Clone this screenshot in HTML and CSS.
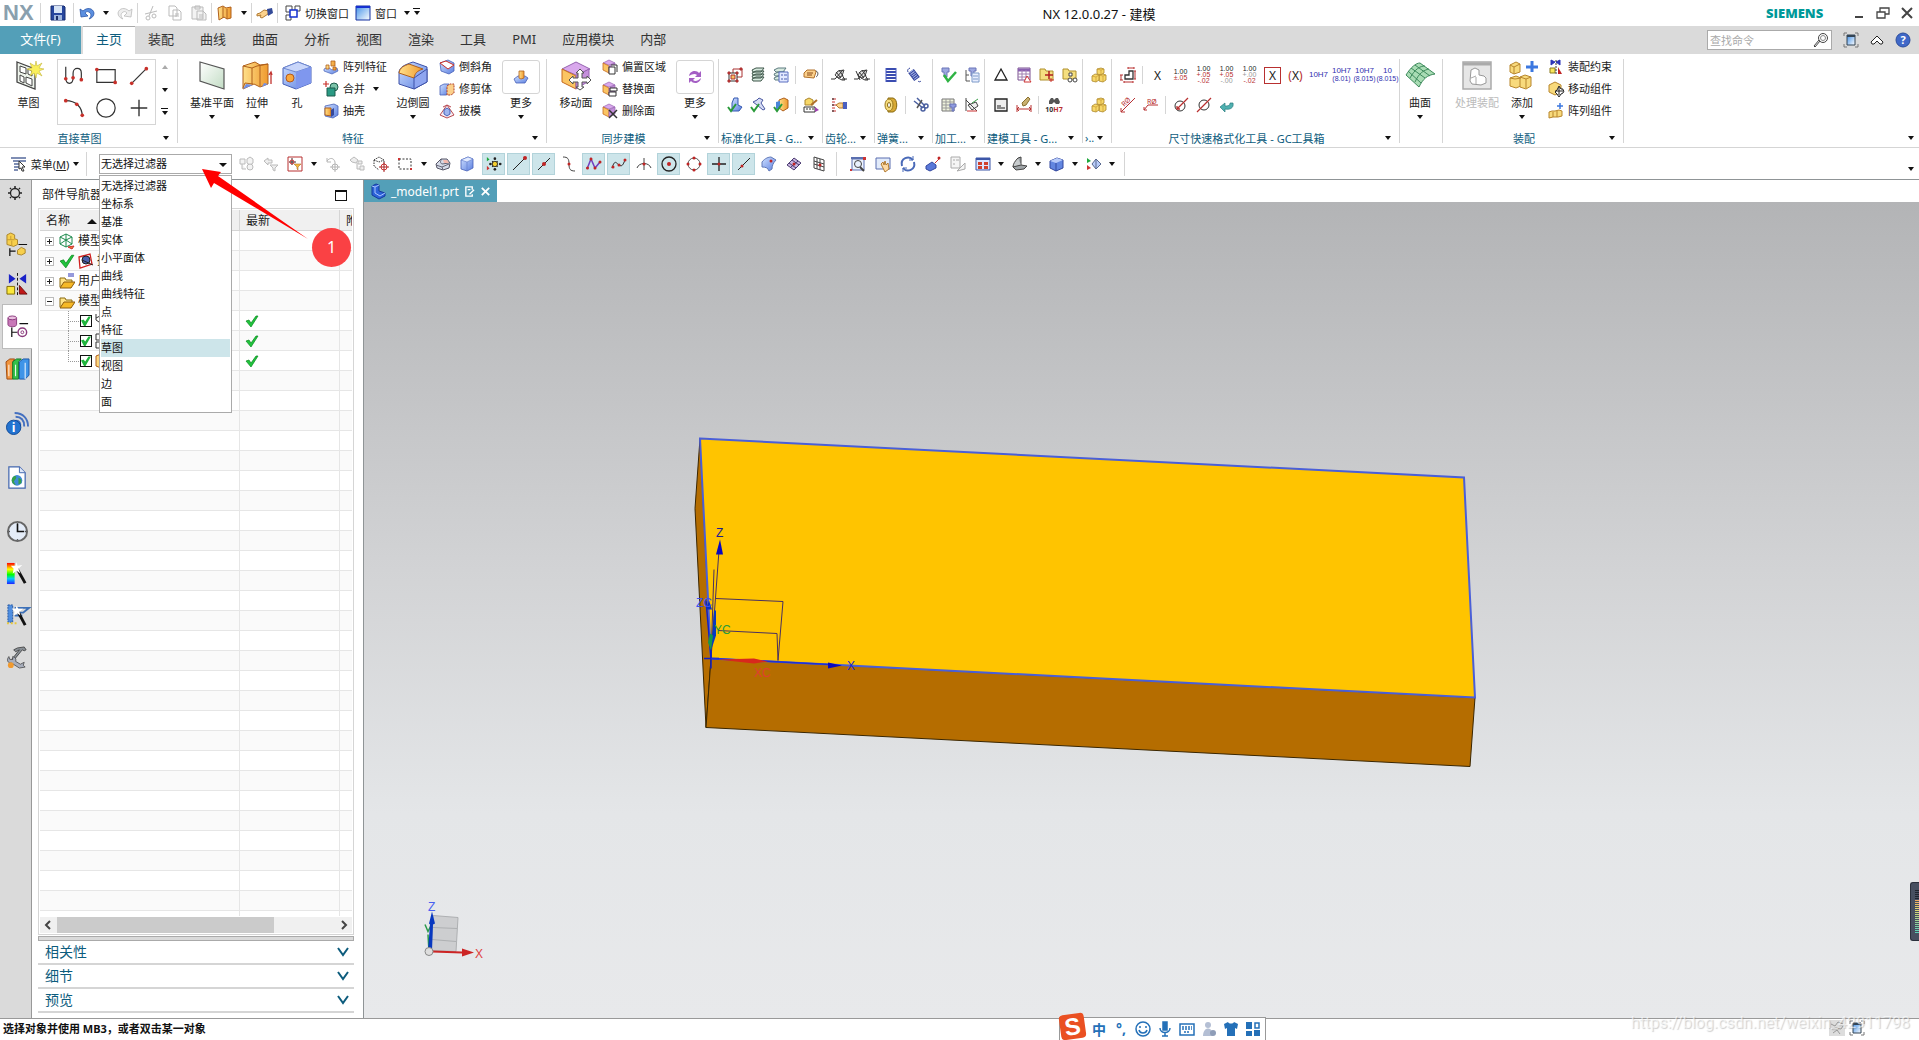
FILE: index.html
```html
<!DOCTYPE html>
<html lang="zh-CN">
<head>
    <meta charset="UTF-8">
    <meta name="viewport" content="width=device-width, initial-scale=1.0">
    <title>NX 12.0.0.27 - 建模</title>
    <link rel="stylesheet" href="styles.css">
</head>
<body>
    <!-- Shared icons -->
    <svg class="defs" width="0" height="0" aria-hidden="true">
        <defs>
            <linearGradient id="gold" x1="0" x2="1"><stop offset="0" stop-color="#ffe08a"/><stop offset="1" stop-color="#ef9a2e"/></linearGradient>
            <linearGradient id="blue" x1="0" x2="1" y1="0" y2="1"><stop offset="0" stop-color="#cfe0ff"/><stop offset="1" stop-color="#5b7fe0"/></linearGradient>
            <linearGradient id="sky" x1="0" x2="1" y1="0" y2="1"><stop offset="0" stop-color="#3f8fe8"/><stop offset="1" stop-color="#fff"/></linearGradient>
            <linearGradient id="glass" x1="0" x2="1" y1="0" y2="1"><stop offset="0" stop-color="#fff"/><stop offset="1" stop-color="#c2dcc4"/></linearGradient>
            <linearGradient id="rainbow" x1="0" x2="0" y1="0" y2="1"><stop offset="0" stop-color="#f00"/><stop offset=".3" stop-color="#ff0"/><stop offset=".55" stop-color="#0f0"/><stop offset=".75" stop-color="#0cf"/><stop offset="1" stop-color="#22f"/></linearGradient>
        </defs>
        <symbol id="check" viewBox="0 0 14 14"><path d="M1 7l3-1 2 3 5-7 2 0-7 11z" fill="#1fc43c" stroke="#0a8a20" stroke-width=".7"/></symbol>
        <symbol id="cubes" viewBox="0 0 16 16"><g fill="#f7d869" stroke="#ab862c" stroke-width=".8"><path d="M6 2l4-1 3 1v4l-3 2-4-1z"/><path d="M8 8l4-1 3 1v5l-3 2-4-1z"/><path d="M1 9l3-2 4 1v5l-3 2-4-1z"/></g><path d="M6 2l4 1 3-1M10 3v5M1 9l4 1 3-2M5 10v5M8 8l4 1 3-1M12 9v6" stroke="#c79b32" stroke-width=".7" fill="none"/></symbol>
        <symbol id="box" viewBox="0 0 16 16"><path d="M2 4l7-3 5 2v9l-6 3-6-2z" fill="url(#blue)" stroke="#4761b8" stroke-width=".8"/><path d="M2 4l6 2 6-3-5-2z" fill="#e2ebff" stroke="#5f7ac9" stroke-width=".6"/><path d="M8 6v9" stroke="#5f7ac9" stroke-width=".6"/></symbol>
        <symbol id="facebox" viewBox="0 0 16 16"><path d="M1 4l6-3 6 3-6 2z" fill="#d9a8ec" stroke="#9563b0" stroke-width=".7"/><path d="M1 4l6 3v7l-6-3z" fill="#fbc563" stroke="#c66a20" stroke-width=".8"/><path d="M7 7l6-3v7l-6 3z" fill="#c58fdc" stroke="#9563b0" stroke-width=".7"/></symbol>
        <symbol id="folder" viewBox="0 0 16 14"><path d="M1 12V3h5l1 2h6v2" fill="#ffe48a" stroke="#8a6a10"/><path d="M1 13l4-6h11l-4 6z" fill="#f6b927" stroke="#8a5c10"/></symbol>
        <symbol id="gears" viewBox="0 0 16 16"><path d="M4 8l3-4 6-1-2 6-4 2z" fill="#e2e2e2" stroke="#444"/><path d="M0 12h4l8-9M11 12h5M5 5l5 6M8 3l4 6M7 11l4 2h3l-3-5" stroke="#333" fill="none"/></symbol>
        <symbol id="fit" viewBox="0 0 16 16"><path d="M1 4V1h3M12 1h3v3M15 12v3h-3M4 15H1v-3" fill="none" stroke="#777"/><path d="M4 3h8v10H4z" fill="url(#sky)" stroke="#345"/><path d="M4 4h8" stroke="#345" stroke-width="2"/></symbol>
    </svg>

    <!-- Title bar -->
    <header class="titlebar">
        <div class="quick">
            <span class="nx">NX</span>
            <i class="sep"></i>
            <button class="q q-save" title="保存"><svg viewBox="0 0 16 16"><path d="M1 1h13l1 1v13H1z" fill="#27469e" stroke="#162c70"/><path d="M4 1h8v7H4z" fill="#d7e4f5"/><path d="M4 10h8v5H4z" fill="#9eb5dd"/><path d="M6 11h2v4H6z" fill="#1a2d66"/></svg></button>
            <i class="sep"></i>
            <button class="q" title="撤销"><svg viewBox="0 0 16 16"><path d="M1 4l3 2c4-4 10-3 11 2 0 3-2 5-5 6 2-2 3-5 0-7-2-1-3 0-4 1l3 3-7 1z" fill="#5b8fe0" stroke="#2c57a8" stroke-width=".8"/></svg></button>
            <button class="drop" aria-label="撤销列表"><i class="caret"></i></button>
            <button class="q" title="重做"><svg viewBox="0 0 16 16"><path d="M15 4l-3 2C8 2 2 3 1 8c0 3 2 5 5 6-2-2-3-5 0-7 2-1 3 0 4 1l-3 3 7 1z" fill="#eee" stroke="#bbb" stroke-width=".8"/></svg></button>
            <i class="sep"></i>
            <button class="q q-edit" title="剪切"><svg viewBox="0 0 16 16" fill="none" stroke="#bbb"><path d="M6 11L10 1M14 6L2 9"/><circle cx="5" cy="13" r="2"/><circle cx="11" cy="11" r="2"/></svg></button>
            <button class="q q-edit" title="复制"><svg viewBox="0 0 16 16" fill="#fff" stroke="#bbb"><path d="M2 1h6l2 2v8H2zM6 5h6l2 2v8H6zM8 9h4M8 11h4"/></svg></button>
            <button class="q q-edit" title="粘贴"><svg viewBox="0 0 16 16" fill="#f3f3f3" stroke="#bbb"><path d="M1 2h11v12H1zM4 1h5v3H4zM6 6h6l3 3v6H6zM8 10h4M8 12h4"/></svg></button>
            <i class="sep"></i>
            <button class="q" title="拉伸"><svg viewBox="0 0 16 16"><path d="M1 3l5-2 3 2 5-1v11l-4 1-3-2-5 3z" fill="url(#gold)" stroke="#b0601c"/><path d="M6 2v11M10 4v10" stroke="#b0601c"/></svg></button>
            <button class="drop" aria-label="更多特征"><i class="caret"></i></button>
            <i class="sep"></i>
            <button class="q" title="触控"><svg viewBox="0 0 16 16"><path d="M0 9l3-1 4-3 5 1-1 3-6 4-2-1 1-2-4 1z" fill="#fcd28c" stroke="#b27b32"/><path d="M10 4l5-1 1 5-5 3z" fill="#334a98"/></svg></button>
            <i class="sep"></i>
            <button class="q q-text"><svg viewBox="0 0 16 16" fill="#fff" stroke="#444"><path d="M1 1h6v6H1zM10 1h5v5h-5zM1 10h5v5H1z"/><path d="M5 5h7v7H5z" stroke="#1530d0" stroke-width="1.5"/></svg>切换窗口</button>
            <button class="q q-text"><svg viewBox="0 0 16 16"><path d="M1 1h14v14H1z" fill="url(#sky)" stroke="#1530a0"/><path d="M1 2h14" stroke="#1530d0" stroke-width="2"/></svg>窗口<i class="caret"></i></button>
            <button class="drop bar" aria-label="工具条选项"><i class="caret"></i></button>
        </div>
        <h1 class="title">NX 12.0.0.27 - 建模</h1>
        <span class="brand">SIEMENS</span>
        <div class="window-buttons">
            <button aria-label="最小化"><svg viewBox="0 0 14 14"><path d="M3 11h8" stroke="#444" stroke-width="2"/></svg></button>
            <button aria-label="还原"><svg viewBox="0 0 14 14" fill="#fff" stroke="#444" stroke-width="1.3"><path d="M4 2h9v6H4z"/><path d="M1 6h8v6H1z"/></svg></button>
            <button aria-label="关闭"><svg viewBox="0 0 14 14"><path d="M2 2l10 10M12 2L2 12" stroke="#444" stroke-width="2"/></svg></button>
        </div>
    </header>

    <!-- Ribbon tabs -->
    <nav class="tabs">
        <a class="file" href="#">文件(F)</a>
        <a class="active" href="#">主页</a>
        <a href="#">装配</a>
        <a href="#">曲线</a>
        <a href="#">曲面</a>
        <a href="#">分析</a>
        <a href="#">视图</a>
        <a href="#">渲染</a>
        <a href="#">工具</a>
        <a href="#">PMI</a>
        <a href="#">应用模块</a>
        <a href="#">内部</a>
        <div class="find">
            <input type="text" placeholder="查找命令" aria-label="查找命令">
            <svg viewBox="0 0 16 16" fill="none" stroke="#444"><circle cx="10" cy="6" r="4.5"/><circle cx="10" cy="6" r="2.5" stroke="#888"/><path d="M7 9l-5 6-1-1 5-6"/></svg>
        </div>
        <button class="help" aria-label="全屏"><svg viewBox="0 0 16 16"><use href="#fit"/></svg></button>
        <button class="help" aria-label="最小化功能区"><svg viewBox="0 0 16 16" fill="#fff" stroke="#222"><path d="M2 10l6-6 6 6-1 2h-2L8 9l-3 3H3z"/></svg></button>
        <button class="help" aria-label="帮助"><svg viewBox="0 0 16 16"><circle cx="8" cy="8" r="7" fill="#3f68c8" stroke="#2c4d9c"/><text x="8" y="12" text-anchor="middle" font-size="11" font-weight="700" fill="#fff">?</text></svg></button>
    </nav>

    <!-- Ribbon -->
    <main class="ribbon">
        <section class="group g-sketch">
            <div class="group-body">
                <button class="tool sketch"><svg viewBox="0 0 30 30"><path d="M3 2l18 7v20L3 22z" fill="#eef4ec" stroke="#444" stroke-width="1.3"/><path d="M6 6l6 2v6l-6-2zM6 15l4 2v6l-4-2zM12 17l6 2v7l-6-3zM14 9l4 2v5l-4-2z" fill="#fff" stroke="#444"/><path d="M22 1l1 5 5-3-3 5 5 1-5 2 3 5-5-3-1 5-2-5-4 3 2-5-5-2 5-1-2-5 5 3z" fill="#f9ef5c" stroke="#c4b63c" stroke-width=".6"/></svg>草图</button>
                <div class="gallery">
                    <button title="轮廓"><svg viewBox="0 0 24 24" fill="none" stroke="#333" stroke-width="1.3"><path d="M3 2v12c0 8 8 8 8 0V9c0-7 9-7 9 0v7"/><g fill="#c8302a" stroke="none"><circle cx="3" cy="15" r="2"/><circle cx="11" cy="14" r="2"/><circle cx="20" cy="16" r="2"/></g></svg></button>
                    <button title="矩形"><svg viewBox="0 0 24 24" fill="none" stroke="#333" stroke-width="1.3"><path d="M2 5h20v14H2z"/><g fill="#c8302a" stroke="none"><circle cx="2" cy="5" r="2"/><circle cx="22" cy="19" r="2"/></g></svg></button>
                    <button title="直线"><svg viewBox="0 0 24 24"><path d="M4 20L20 4" stroke="#333" stroke-width="1.3"/><g fill="#c8302a"><circle cx="4" cy="20" r="2"/><circle cx="20" cy="4" r="2"/></g></svg></button>
                    <button title="圆弧"><svg viewBox="0 0 24 24" fill="none" stroke="#333" stroke-width="1.3"><path d="M3 4c11 0 18 7 18 17"/><g fill="#c8302a" stroke="none"><circle cx="3" cy="4" r="2"/><circle cx="15" cy="8" r="2"/><circle cx="21" cy="20" r="2"/></g></svg></button>
                    <button title="圆"><svg viewBox="0 0 24 24"><circle cx="12" cy="12" r="10" fill="none" stroke="#333" stroke-width="1.3"/></svg></button>
                    <button title="点"><svg viewBox="0 0 24 24"><path d="M12 3v18M3 12h18" stroke="#333" stroke-width="1.5"/></svg></button>
                </div>
                <div class="scroll">
                    <button class="drop up" aria-label="上"><i class="caret"></i></button>
                    <button class="drop" aria-label="下"><i class="caret"></i></button>
                    <button class="drop bar" aria-label="展开"><i class="caret"></i></button>
                </div>
            </div>
            <div class="group-name"><span>直接草图</span><i class="caret"></i></div>
        </section>

        <section class="group g-feature">
            <div class="group-body">
                <button class="tool wide"><svg viewBox="0 0 30 30"><path d="M3 2l24 7v20L3 21z" fill="url(#glass)" stroke="#555" stroke-width="1.2"/></svg>基准平面<i class="caret"></i></button>
                <button class="tool"><svg viewBox="0 0 30 30"><path d="M1 6l12-4 5 3 8-1v20l-8 3-6-3-11 5z" fill="url(#gold)" stroke="#b0601c"/><path d="M1 6l9 2 5-2 11-2M10 8v16M18 5v21M1 28l2-5 8 1" fill="none" stroke="#b0601c"/><path d="M1 29l3-5 7 1zM20 27l2-4 4 1z" fill="#6f8fe8"/><path d="M29 24V12m-2 3l2-3 1 3" stroke="#c23430" fill="none" stroke-width="1.3"/></svg>拉伸<i class="caret"></i></button>
                <button class="tool"><svg viewBox="0 0 30 30"><path d="M1 8l15-6 13 5v16l-15 6-13-5z" fill="url(#blue)" stroke="#4761b8"/><path d="M1 8l13 4 15-5-13-5z" fill="#c9d6fa" stroke="#6f88d0"/><path d="M14 12l15-5v16l-15 6z" fill="#7f97ee"/><circle cx="8" cy="18" r="4" fill="#f9a83c" stroke="#b5591c"/></svg>孔</button>
                <div class="col">
                    <button><svg viewBox="0 0 16 16"><path d="M1 10l4-2 4 3 5-2 1 3-6 3-8-3z" fill="url(#blue)" stroke="#4761b8" stroke-width=".7"/><path d="M3 6h3v4H3zM8 2h4v5H8zM10 8h3v3h-3z" fill="url(#gold)" stroke="#b0601c" stroke-width=".8"/></svg>阵列特征</button>
                    <button><svg viewBox="0 0 16 16"><circle cx="11" cy="6" r="4" fill="#7cc4aa" stroke="#1d5d4c"/><path d="M4 7h8v8H4z" fill="#2a9a84" stroke="#1d5d4c"/><path d="M3 0v6M0 3h6" stroke="#c8302a" stroke-width="1.2"/></svg>合并<i class="caret"></i></button>
                    <button><svg viewBox="0 0 16 16"><path d="M2 3l9-2 4 2v9l-5 3-8-2z" fill="url(#blue)" stroke="#4761b8" stroke-width=".8"/><path d="M2 5h6v8l-6-1z" fill="url(#gold)" stroke="#b0601c"/><path d="M8 7l3-2v7l-3 2z" fill="#35489c"/></svg>抽壳</button>
                </div>
                <button class="tool"><svg viewBox="0 0 30 30"><path d="M1 12C2 7 6 5 15 2l14 5v15l-13 7-15-5z" fill="url(#blue)" stroke="#3d51a8"/><path d="M1 13C2 7 6 6 11 4l14 5c-6 2-8 4-9 9z" fill="url(#gold)" stroke="#b0601c"/><path d="M16 18l13-9v13l-13 7z" fill="#8fa6f0" stroke="#3d51a8"/></svg>边倒圆<i class="caret"></i></button>
                <div class="col">
                    <button><svg viewBox="0 0 16 16"><path d="M1 4l8-3 6 3v8l-5 3-8-3z" fill="url(#blue)" stroke="#4761b8" stroke-width=".8"/><path d="M1 4l6-2 8 4-6 4z" fill="#fff" stroke="#c8302a"/></svg>倒斜角</button>
                    <button><svg viewBox="0 0 16 16"><path d="M1 5l4-2h5v10l-3 1H1z" fill="url(#blue)" stroke="#4761b8" stroke-width=".8"/><path d="M8 5l3-2h4v9l-3 2H8z" fill="#fbd08b" stroke="#b0402a" stroke-dasharray="2 1"/></svg>修剪体</button>
                    <button><svg viewBox="0 0 16 16"><path d="M8 2L1 12l7 3 7-3zM4 4l4-2 4 2" fill="#f8eef2" stroke="#b84a52"/><path d="M5 7l3-2 3 2v4l-3 2-3-2z" fill="#9fb4ee" stroke="#4761b8"/></svg>拔模</button>
                </div>
                <button class="tool more"><span><svg viewBox="0 0 16 16"><path d="M1 10l4-3h7l3 2-3 5H3z" fill="url(#blue)" stroke="#4761b8" stroke-width=".8"/><path d="M6 2h5v7l-3 1-2-1z" fill="url(#gold)" stroke="#b0601c" stroke-width=".8"/></svg></span>更多<i class="caret"></i></button>
            </div>
            <div class="group-name"><span>特征</span><i class="caret"></i></div>
        </section>

        <section class="group g-sync">
            <div class="group-body">
                <button class="tool"><svg viewBox="0 0 30 30"><path d="M1 9l14-7 14 7-14 6z" fill="#d9a8ec" stroke="#9563b0"/><path d="M1 9l14 7v13L1 22z" fill="#fbc563" stroke="#c66a20"/><path d="M15 16l13-7v12l-13 8z" fill="#c58fdc" stroke="#9563b0"/><path d="M19 9l4 4h-2v5h5v-2l4 4-4 4v-2h-5v5h2l-4 3-4-3h2v-5h-5v2l-4-4 4-4v2h5v-5h-2z" fill="#fff" stroke="#555"/></svg>移动面</button>
                <div class="col">
                    <button><svg viewBox="0 0 16 16"><use href="#facebox"/><path d="M7 8h6v7H7zM9 6h6v7" fill="#fff" stroke="#333"/></svg>偏置区域</button>
                    <button><svg viewBox="0 0 16 16"><use href="#facebox"/><path d="M8 7h7v3H8zM7 11h7v4H7z" fill="#fff" stroke="#333"/></svg>替换面</button>
                    <button><svg viewBox="0 0 16 16"><use href="#facebox"/><path d="M7 7l8 8M15 7l-8 8" stroke="#333" stroke-width="1.5"/></svg>删除面</button>
                </div>
                <button class="tool more"><span><svg viewBox="0 0 16 16"><path d="M2 7c1-6 8-6 10-3l2-2v6H8l2-2c-2-2-5-1-8 1zM14 9c-1 6-8 6-10 3l-2 2V9h6l-2 2c2 2 5 1 8-2z" fill="#a45fc4"/></svg></span>更多<i class="caret"></i></button>
            </div>
            <div class="group-name"><span>同步建模</span><i class="caret"></i></div>
        </section>

        <section class="group g-std">
            <div class="group-body rows">
                <div>
                    <button><svg viewBox="0 0 16 16" fill="#fff" stroke="#a33"><path d="M6 2h9v8H6z"/><path d="M2 6h8v8H2z" stroke="#333"/><path d="M4 8h4v4H4z" fill="#fbc563"/><path d="M1 5h2v2H1zM9 5h2v2H9zM1 13h2v2H1zM9 13h2v2H9zM13 1h2v2h-2z" fill="#c33"/></svg></button>
                    <button><svg viewBox="0 0 16 16" fill="#d7eadf" stroke="#3c5548"><path d="M2 12l4-2h8l-3 4H3zM2 9l4-2h8l-3 4H3zM2 6l4-2h8l-3 4H3zM2 3l4-2h8l-3 4H3z"/></svg></button>
                    <button><svg viewBox="0 0 16 16" fill="#d7eadf" stroke="#5d7a80"><path d="M1 11l4-2h7l-3 4H2zM1 7l4-2h7l-3 4H2zM1 3l4-2h8l-3 4H3z"/><path d="M6 5h9v10H6z" fill="#e3e9ff" stroke="#5a6fc0"/><path d="M8 8h2M11 8h3M8 12h2M11 12h3" stroke="#4a5fb0"/></svg></button>
                    <i class="sep"></i>
                    <button><svg viewBox="0 0 16 16"><path d="M1 6l3-3h8l1 2-2 6-10-1z" fill="#fbd08b" stroke="#b0702c"/><path d="M4 6h6M4 8h5" stroke="#8a4a18"/><path d="M13 4c3 1 2 5 0 6" stroke="#555" fill="none"/></svg></button>
                </div>
                <div>
                    <button><svg viewBox="0 0 16 16"><path d="M7 1h4v7l4 2-3 4H5V6z" fill="url(#blue)" stroke="#3458b0"/><path d="M1 10l3 4 5-7" stroke="#2a9a3a" stroke-width="2" fill="none"/></svg></button>
                    <button><svg viewBox="0 0 16 16"><path d="M3 5l4-2 2-2 4 2-2 3 4 6-2 1-6-5z" fill="#d6dcf5" stroke="#4a58a0"/><path d="M1 10l3 4 5-7" stroke="#2a9a3a" stroke-width="2" fill="none"/></svg></button>
                    <button><svg viewBox="0 0 16 16"><path d="M6 3l5-2 4 2v8l-5 3-4-3z" fill="url(#gold)" stroke="#b0601c"/><path d="M3 5l4-1v8H3z" fill="#4a86d8"/><path d="M1 10l3 4 5-7" stroke="#2a9a3a" stroke-width="2" fill="none"/></svg></button>
                    <i class="sep"></i>
                    <button><svg viewBox="0 0 16 16"><path d="M2 3l4-2 4 2v5H2z" fill="#f7d869" stroke="#ab862c"/><path d="M1 10h11v5H1z" fill="#fff" stroke="#333"/><path d="M3 12h2M6 12h2M9 12h2" stroke="#333"/><path d="M8 8l6-5" stroke="#b0702c" stroke-width="2"/><path d="M12 10l4 3-4 2z" fill="#a040b0"/></svg></button>
                </div>
            </div>
            <div class="group-name left"><span>标准化工具 - G...</span><i class="caret"></i></div>
        </section>

        <section class="group g-gear">
            <div class="group-body rows">
                <div><button><svg viewBox="0 0 16 16"><use href="#gears"/></svg></button><button><svg viewBox="0 0 16 16"><use href="#gears"/><path d="M2 4l4 9" stroke="#333"/></svg></button></div>
                <div><button><svg viewBox="0 0 16 16"><path d="M1 2h4M1 5h3M1 8h4M1 11h3M1 14h4" stroke="#c33"/><path d="M1 2h2M1 8h2M1 14h2" stroke="#222"/><path d="M5 8l3-2h4v5H8z" fill="#fcd28c" stroke="#b27b32"/><path d="M12 5h4v7h-4z" fill="#4a5fc0"/></svg></button></div>
            </div>
            <div class="group-name left"><span>齿轮...</span><i class="caret"></i></div>
        </section>

        <section class="group g-spring">
            <div class="group-body rows">
                <div>
                    <button><svg viewBox="0 0 16 16"><path d="M3 2h10M3 5h10M3 8h10M3 11h10M3 14h10" stroke="#3a4cb0" stroke-width="2"/><path d="M3 1v14M13 1v14" stroke="#4a5cc0"/></svg></button>
                    <button><svg viewBox="0 0 16 16"><path d="M5 4l6 8" stroke="#33449c" stroke-width="7"/><path d="M5 4l6 8" stroke="#a9b6ea" stroke-width="5" stroke-dasharray="1 1"/><path d="M4 1c-2 1-3 2-2 4M12 14c1 1 2 1 3 0" stroke="#33449c" fill="none"/></svg></button>
                </div>
                <div>
                    <button><svg viewBox="0 0 16 16"><path d="M5 1h5c5 1 5 13 0 14H5z" fill="#d8aa35" stroke="#8a6a10"/><ellipse cx="6" cy="8" rx="4" ry="6" fill="#f7dc7c" stroke="#9a7a20"/><ellipse cx="6" cy="8" rx="1.5" ry="2.5" fill="#fff" stroke="#8a6a10"/></svg></button>
                    <i class="sep"></i>
                    <button><svg viewBox="0 0 16 16" fill="none" stroke="#4a5fa0" stroke-width="1.5"><path d="M1 4l9 7M4 1l8 8"/><path d="M9 3l-5 8" stroke="#555"/><circle cx="10" cy="12" r="2"/><circle cx="13" cy="9" r="2"/></svg></button>
                </div>
            </div>
            <div class="group-name left"><span>弹簧...</span><i class="caret"></i></div>
        </section>

        <section class="group g-machine">
            <div class="group-body rows">
                <div>
                    <button><svg viewBox="0 0 16 16"><path d="M1 1h7v4H6v5H3V5H1z" fill="#9da8e0" stroke="#6a74b8"/><path d="M3 8l4 6 8-9" stroke="#2fb344" stroke-width="2.5" fill="none"/></svg></button>
                    <button><svg viewBox="0 0 16 16"><path d="M5 1h7v3h-2v5H7V4H5z" fill="#9da8e0" stroke="#6a74b8"/><path d="M2 3v11h4M2 8h3" stroke="#555" fill="none"/><path d="M8 6h7v9H8z" fill="#e8eeff" stroke="#7d9ac8"/><path d="M9 9h5M9 12h5" stroke="#7d9ac8"/></svg></button>
                </div>
                <div>
                    <button><svg viewBox="0 0 16 16"><path d="M1 2h12v12H1z" fill="#eef2dc" stroke="#777"/><path d="M1 5h12M1 8h12M1 11h12M5 2v12M9 2v12" stroke="#999"/><path d="M9 7h6v3h-2v4h-2v-4H9z" fill="#8f9be0" stroke="#6a74b8"/></svg></button>
                    <button><svg viewBox="0 0 16 16" fill="none" stroke="#444"><path d="M2 1v13M2 3l11 11M4 8l8-3 2 4-6 4z" fill="#eee"/><path d="M8 6l6-4" stroke="#3aa04a"/><path d="M3 14h10" stroke="#c33"/></svg></button>
                </div>
            </div>
            <div class="group-name left"><span>加工...</span><i class="caret"></i></div>
        </section>

        <section class="group g-model">
            <div class="group-body rows">
                <div>
                    <button><svg viewBox="0 0 16 16"><path d="M8 2l6 11H2z" fill="#fff" stroke="#222" stroke-width="1.3"/></svg></button>
                    <button><svg viewBox="0 0 16 16"><path d="M2 1h12v12H2z" fill="#fff" stroke="#7a5090"/><path d="M2 3h12" stroke="#8a60b0" stroke-width="3"/><path d="M2 7h12M2 10h12M6 3v10M10 3v10" stroke="#a080b0"/><path d="M11 9l4 6H8z" fill="#fff" stroke="#c33"/></svg></button>
                    <button><svg viewBox="0 0 16 16"><path d="M1 2h5l1 2h7v9H1z" fill="#f5df80" stroke="#b0902c"/><path d="M10 4v8M6 8h8" stroke="#b02020" stroke-width="1.5"/><path d="M12 11v4M10 13h5" stroke="#c33"/></svg></button>
                    <button><svg viewBox="0 0 16 16"><path d="M1 2h5l1 2h7v8H1z" fill="#f5df80" stroke="#b0902c"/><path d="M7 6h3v3H7z" fill="#fff" stroke="#444"/><circle cx="8" cy="13" r="2" fill="#fff" stroke="#444"/><circle cx="13" cy="13" r="2" fill="#fff" stroke="#444"/></svg></button>
                </div>
                <div>
                    <button><svg viewBox="0 0 16 16"><path d="M2 2h12v12H2z" fill="#eee" stroke="#222" stroke-width="1.3"/><path d="M4 9h4M4 11h8" stroke="#222"/></svg></button>
                    <button><svg viewBox="0 0 16 16"><path d="M6 6l6-6 2 2-4 6-3 1z" fill="#c9b070" stroke="#8a7030"/><path d="M1 8v7M15 8v7M1 12h14M3 10l-2 2 2 2M13 10l2 2-2 2" stroke="#b83030" fill="none"/></svg></button>
                    <i class="sep"></i>
                    <button><svg viewBox="0 0 16 16"><path d="M3 4l2-3h2l1 2 2-2h2l2 4-1 2h-3L8 5 6 7H3z" fill="#555"/><text x="8" y="15" text-anchor="middle" font-size="7" font-weight="700" fill="#333">10<tspan fill="#b83030">H7</tspan></text></svg></button>
                </div>
            </div>
            <div class="group-name left"><span>建模工具 - G...</span><i class="caret"></i></div>
        </section>

        <section class="group g-p">
            <div class="group-body rows">
                <div><button><svg viewBox="0 0 16 16"><use href="#cubes"/></svg></button></div>
                <div><button><svg viewBox="0 0 16 16"><use href="#cubes"/></svg></button></div>
            </div>
            <div class="group-name left"><span>›..</span><i class="caret"></i></div>
        </section>

        <section class="group g-dim">
            <div class="group-body rows">
                <div>
                    <button><svg viewBox="0 0 16 16" fill="none" stroke="#333"><path d="M5 12V8h4V4h4v8z" stroke-width="1.3"/><path d="M8 1h6M8 0v2M14 0v2M15 4v8M1 8v5M0 8h3M0 13h3M4 15h9M4 14v2M13 14v2M14 4h2M14 12h2" stroke="#b83030"/></svg></button>
                    <i class="sep"></i>
                    <button class="x">X</button>
                    <button class="tol">1.00<b>±.05</b></button>
                    <button class="tol">1.00<b>+.05</b><b>-.02</b></button>
                    <button class="tol">1.00<b>+.05</b><b class="g">-.00</b></button>
                    <button class="tol">1.00<b class="g">+.00</b><b>-.02</b></button>
                    <button class="x boxed">X</button>
                    <button class="x paren"><i>(</i>X<i>)</i></button>
                    <button class="fit">10H7</button>
                    <button class="fit">10H7<span>(8.01)</span></button>
                    <button class="fit">10H7<span>(8.015)</span></button>
                    <button class="fit">10<span>(8.015)</span></button>
                </div>
                <div>
                    <button><svg viewBox="0 0 16 16" stroke="#b83030" fill="none"><path d="M1 15L15 1M1 11v4h4"/><text x="3" y="9" font-size="7" stroke="none" fill="#b83030" transform="rotate(-45 5 8)">RØ</text></svg></button>
                    <button><svg viewBox="0 0 16 16" stroke="#b83030" fill="none"><path d="M1 13l4-5h10M1 10v3h3"/><text x="4" y="7" font-size="7" stroke="none" fill="#b83030">RØ</text></svg></button>
                    <i class="sep"></i>
                    <button><svg viewBox="0 0 16 16" fill="none" stroke="#333"><circle cx="7" cy="9" r="5"/><path d="M15 1L4 12M4 9v3h3" stroke="#b83030" stroke-width="1.3"/></svg></button>
                    <button><svg viewBox="0 0 16 16" fill="none" stroke="#333"><circle cx="8" cy="8" r="5"/><path d="M15 1L1 15" stroke="#b83030" stroke-width="1.3"/></svg></button>
                    <button><svg viewBox="0 0 16 16"><path d="M1 10l5-4v3c4 0 5-1 5-3h3c1 5-3 7-8 6v3z" fill="#4fb0b0" stroke="#2a7c80" stroke-width=".7"/></svg></button>
                </div>
            </div>
            <div class="group-name"><span>尺寸快速格式化工具 - GC工具箱</span><i class="caret"></i></div>
        </section>

        <section class="group g-surface">
            <div class="group-body">
                <button class="tool"><svg viewBox="0 0 30 30"><path d="M1 15C6 7 11 3 15 3l15 11c-8 1-12 5-16 13z" fill="#a9dcb4" stroke="#3d8a5c"/><path d="M5 18C10 9 15 6 20 6M10 22c4-9 9-12 14-13M6 8l14 10M10 5l15 11M3 11l13 12" stroke="#3d8a5c" fill="none"/></svg>曲面<i class="caret"></i></button>
            </div>
        </section>

        <section class="group g-asm">
            <div class="group-body">
                <button class="tool wide" disabled><svg viewBox="0 0 30 30"><path d="M1 2h28v27H1z" fill="#e6e6e6" stroke="#aaa" stroke-width="1.5"/><path d="M1 4h28" stroke="#aaa" stroke-width="3"/><path d="M9 10l4-2 4 2v5l5 1 2 2v5l-5 2-9-1-2-3z" fill="#fff" stroke="#999"/><path d="M14 17v7M9 18l5-2" stroke="#aaa"/></svg>处理装配</button>
                <button class="tool"><svg viewBox="0 0 30 30"><g fill="#f8da7c" stroke="#b8862c"><path d="M3 5l6-3 4 2v8l-6 2-4-2z"/><path d="M3 18l6-2 5 2v8l-5 2-6-2z"/><path d="M13 17l5-2 6 2v9l-5 3-6-2z"/><path d="M3 5l4 2 6-3M7 7v7M3 18l5 1 6-1M13 17l6 2 5-2M19 19v9" fill="none"/></g><path d="M25 1v11M19 7h12" stroke="#3c78e0" stroke-width="3"/></svg>添加<i class="caret"></i></button>
                <div class="col">
                    <button><svg viewBox="0 0 16 16"><path d="M3 1l4 2-4 3zM12 1L8 3l4 3z" fill="#2c34b8" stroke="#2c34b8"/><path d="M2 9h5v5H2z" fill="#f8e75c" stroke="#8a7a20"/><path d="M10 8l4 7h-4z" fill="#c02424"/><path d="M8 1v15" stroke="#333" stroke-dasharray="2 1"/></svg>装配约束</button>
                    <button><svg viewBox="0 0 16 16"><path d="M1 4l6-3 6 3v7l-6 3-6-3z" fill="#f8da7c" stroke="#b8862c"/><path d="M11 5l2 3h2v1l1 1-1 2-2 1-2 3-2-3-2-2 2-2z" fill="#fff" stroke="#222"/><path d="M11 6v8M7 10h8" stroke="#222"/></svg>移动组件</button>
                    <button><svg viewBox="0 0 16 16"><path d="M1 9l3-1 3 0 4-1 3 1v5l-4 1-5 0-4 1z" fill="#f8da7c" stroke="#b8862c"/><path d="M5 9v5M9 8v6" stroke="#b8862c"/><path d="M12 0v6M9 3h6" stroke="#3c78e0" stroke-width="1.5"/></svg>阵列组件</button>
                </div>
            </div>
            <div class="group-name"><span>装配</span><i class="caret"></i></div>
        </section>
        <button class="drop ribbon-end" aria-label="功能区选项"><i class="caret"></i></button>
    </main>

    <!-- Selection bar -->
    <div class="selbar">
        <button class="menu"><svg viewBox="0 0 16 16"><path d="M0 2h15M2 5h13M3 8h5M3 11h5M3 14h4" stroke="#556a9c" stroke-width="1.5"/><path d="M8 5l6 6h-3l2 4h-2l-1-3-2 1z" fill="#fff" stroke="#333"/></svg><span>菜单(<u>M</u>)</span><i class="caret"></i></button>
        <i class="sep"></i>
        <div class="filter">
            <select aria-label="选择过滤器">
                <option>无选择过滤器</option>
            </select>
            <i class="caret"></i>
            <ul class="filter-list" role="listbox">
                <li>无选择过滤器</li>
                <li>坐标系</li>
                <li>基准</li>
                <li>实体</li>
                <li>小平面体</li>
                <li>曲线</li>
                <li>曲线特征</li>
                <li>点</li>
                <li>特征</li>
                <li class="hover">草图</li>
                <li>视图</li>
                <li>边</li>
                <li>面</li>
            </ul>
        </div>
        <div class="sel-tools">
            <button><svg viewBox="0 0 16 16" fill="#f3f3f3" stroke="#bbb"><path d="M1 3h5v5H1zM3 8v5h4M8 3l3-2 3 2v4l-3 2-3-2z"/><circle cx="11" cy="11" r="3"/></svg></button>
            <button><svg viewBox="0 0 16 16" fill="#eee" stroke="#bbb"><path d="M1 5l4-3v2h4v3H5v2zM7 9h8l-3 3v3l-2-1v-2z"/></svg></button>
            <button><svg viewBox="0 0 16 16"><path d="M1 1h14v14H1z" fill="#fff" stroke="#b83030"/><path d="M5 2v7M2 6h7" stroke="#333"/><circle cx="5" cy="6" r="2" fill="none" stroke="#c33"/><path d="M7 8h7l-3 3v3l-1-1v-2z" fill="#f5b93c" stroke="#b0702c" stroke-width=".6"/></svg></button>
            <button class="drop"><i class="caret"></i></button>
            <button><svg viewBox="0 0 16 16" fill="none" stroke="#b5b5b5"><path d="M2 2v4h4M2 5c3-4 7-3 8 1"/><circle cx="10" cy="11" r="3"/><path d="M10 6v10M5 11h10"/></svg></button>
            <button><svg viewBox="0 0 16 16" fill="#eee" stroke="#bbb"><path d="M1 4l4-3 4 3-2 3-4-1zM9 5h4v3H9zM11 10h4v4h-4zM8 7v6h3"/></svg></button>
            <button><svg viewBox="0 0 16 16" fill="none" stroke="#333"><path d="M1 4l5-3 5 3v4M1 4v6l5 4M1 4l5 2 5-2" stroke-dasharray="1.5 1"/><circle cx="11" cy="11" r="3" stroke="#c33"/><path d="M11 6v10M6 11h10" stroke="#a22"/></svg></button>
            <button><svg viewBox="0 0 16 16"><path d="M2 3h12v10H2z" fill="none" stroke="#333" stroke-dasharray="2 1.5"/><path d="M1 2h2v2H1zM13 12h2v2h-2z" fill="#c33"/></svg></button>
            <button class="drop"><i class="caret"></i></button>
            <button><svg viewBox="0 0 16 16"><path d="M1 8l5-5h6l3 4-1 5-6 2-6-2z" fill="#d6dbe8" stroke="#556"/><path d="M7 3c-2 2-2 4 0 5l7-1M1 9l6 2 1 3M7 11l7-3" fill="none" stroke="#667"/><path d="M8 4h4l2 3-5 0z" fill="#f4b8ac"/></svg></button>
            <button><svg viewBox="0 0 16 16"><use href="#box"/></svg></button>
        </div>
        <div class="sel-tools snaps">
            <button class="on"><svg viewBox="0 0 18 18"><path d="M1 1v5l3-2z" fill="#1ea83c"/><path d="M1 11v5l3-2z" fill="#c33"/><path d="M7 6l6 6M13 6l-6 6" stroke="#222" stroke-width="1.5"/><circle cx="10" cy="9" r="3" fill="#f4d030" stroke="#222"/><g fill="#222"><circle cx="10" cy="3" r="1.5"/><circle cx="10" cy="15" r="1.5"/><circle cx="5" cy="9" r="1.5"/><circle cx="16" cy="9" r="1.5"/></g></svg></button>
            <button class="on"><svg viewBox="0 0 16 16"><path d="M2 14L14 2" stroke="#222"/><circle cx="14" cy="2" r="2" fill="#c02424"/></svg></button>
            <button class="on"><svg viewBox="0 0 16 16"><path d="M2 14L14 2" stroke="#222"/><circle cx="8" cy="8" r="2" fill="#c02424"/></svg></button>
            <button><svg viewBox="0 0 16 16"><path d="M2 1c5 0 6 2 6 7s1 7 6 7" fill="none" stroke="#444"/><circle cx="8" cy="8" r="1.5" fill="#c02424"/></svg></button>
            <button class="on"><svg viewBox="0 0 16 16"><path d="M1 13L5 3l4 9 5-6" fill="none" stroke="#7040c0" stroke-width="1.5"/><g fill="#c02424"><circle cx="1.5" cy="12" r="1.5"/><circle cx="5" cy="3" r="1.5"/><circle cx="9" cy="12" r="1.5"/><circle cx="14" cy="6" r="1.5"/></g></svg></button>
            <button class="on"><svg viewBox="0 0 16 16"><path d="M1 12c3-9 4-5 7-3s4 0 6-5" fill="none" stroke="#222"/><g fill="#c02424"><circle cx="2" cy="11" r="1.5"/><circle cx="8" cy="9" r="1.5"/><circle cx="14" cy="4" r="1.5"/></g></svg></button>
            <button><svg viewBox="0 0 16 16"><path d="M1 12c2-6 12-6 14 0M8 2v12" fill="none" stroke="#444"/><circle cx="8" cy="8" r="1.5" fill="#c02424"/></svg></button>
            <button class="on"><svg viewBox="0 0 16 16"><circle cx="8" cy="8" r="7" fill="none" stroke="#222" stroke-width="1.3"/><circle cx="8" cy="8" r="2" fill="#c02424"/></svg></button>
            <button><svg viewBox="0 0 16 16"><circle cx="8" cy="8" r="6" fill="none" stroke="#555"/><g fill="#c02424"><circle cx="8" cy="2" r="1.5"/><circle cx="8" cy="14" r="1.5"/><circle cx="2" cy="8" r="1.5"/><circle cx="14" cy="8" r="1.5"/></g></svg></button>
            <button class="on"><svg viewBox="0 0 16 16"><path d="M8 1v14M1 8h14" stroke="#222" stroke-width="1.3"/><circle cx="8" cy="8" r="1.5" fill="#c02424"/></svg></button>
            <button class="on"><svg viewBox="0 0 16 16"><path d="M2 14L14 2" stroke="#222"/><circle cx="6" cy="10" r="1.5" fill="#c02424"/></svg></button>
            <button><svg viewBox="0 0 16 16"><path d="M1 6c3-4 7-5 9-5l5 3c-3 3-4 6-4 9l-3 2c-1-3-3-4-7-4z" fill="url(#blue)" stroke="#6078b8"/><circle cx="10" cy="5" r="1.5" fill="#c02424"/></svg></button>
            <button><svg viewBox="0 0 16 16"><path d="M1 9l7-7 7 5-7 7z" fill="#c8b4e0" stroke="#4a3a70"/><path d="M3 7l7 5M6 4l7 5M5 11l7-6" stroke="#4a3a70"/><circle cx="8" cy="8" r="1.5" fill="#c02424"/></svg></button>
            <button><svg viewBox="0 0 16 16" fill="none" stroke="#444"><path d="M3 1l10 3v11L3 12zM6 2v11M9 3v11M3 5l10 3M3 8l10 3"/><circle cx="9" cy="9" r="1.5" fill="#c02424" stroke="none"/></svg></button>
        </div>
        <i class="sep"></i>
        <div class="sel-tools views">
            <button><svg viewBox="0 0 16 16"><path d="M2 3h12v11H2z" fill="#eef4ff" stroke="#5a6fb0"/><path d="M1 2h13" stroke="#5a6fb0" stroke-width="2"/><circle cx="8" cy="8" r="3.5" fill="#eaf2ff" stroke="#444"/><path d="M10 11l4 4" stroke="#444" stroke-width="2"/><path d="M0 13h2v2H0zM13 1h3v3h-3z" fill="#c33"/></svg></button>
            <button><svg viewBox="0 0 16 16"><path d="M1 2h14v11H1z" fill="#e2ebfa" stroke="#5a6fb0"/><path d="M6 8l2-2 1 3 1-4 1 4 2-2 1 6-4 3z" fill="#fcd9a4" stroke="#b27b32"/></svg></button>
            <button><svg viewBox="0 0 16 16" fill="none" stroke="#4a6ab8" stroke-width="2"><path d="M2 10C0 2 9-1 13 4M14 6c2 8-7 11-11 6"/><path d="M13 0v4H9M3 16v-4h4" stroke-width="1"/></svg></button>
            <button><svg viewBox="0 0 16 16"><path d="M1 10l6-4 4 3v3l-6 3-4-2z" fill="#5a78d8" stroke="#3348a0"/><path d="M10 7l4-4" stroke="#c33"/><circle cx="14" cy="2" r="1.5" fill="#c02424"/></svg></button>
            <button><svg viewBox="0 0 16 16" fill="#f5f5f5" stroke="#aaa"><path d="M1 1h9v11H1zM3 4h2M3 8h2M6 4h3M7 15l8-8v6z"/></svg></button>
            <button><svg viewBox="0 0 16 16"><path d="M1 2h14v12H1z" fill="#dce6ff" stroke="#3c56a8"/><path d="M1 3h14" stroke="#3c56a8" stroke-width="2"/><path d="M3 6h4v3H3zM9 6h4v3H9zM3 10h4v3H3zM9 10h4v3H9z" fill="#d0402c"/></svg></button>
            <button class="drop"><i class="caret"></i></button>
            <button><svg viewBox="0 0 16 16"><path d="M6 2l3-1v8l6 1-3 3-8 1-3-3z" fill="#a0a5a8" stroke="#444"/><path d="M6 2c-3 3-5 6-5 9l8-2" fill="#c8ccce" stroke="#444"/></svg></button>
            <button class="drop"><i class="caret"></i></button>
            <button><svg viewBox="0 0 16 16"><path d="M1 5l7-3 6 2v8l-7 3-6-3z" fill="#6286e0" stroke="#3348a0"/><path d="M1 5l6 2 7-3-6-2z" fill="#b9ccfa"/><path d="M7 7v8" stroke="#3348a0"/></svg></button>
            <button class="drop"><i class="caret"></i></button>
            <button><svg viewBox="0 0 16 16"><path d="M1 2v5l4-2z" fill="#1ea83c"/><path d="M1 9v5l4-2z" fill="#c33"/><path d="M6 8l4-5 5 5-5 5z" fill="#b9ccfa" stroke="#5a6a90"/><path d="M10 3v10" stroke="#5a6a90"/></svg></button>
            <button class="drop"><i class="caret"></i></button>
        </div>
        <i class="sep"></i>
        <button class="drop selbar-end" aria-label="选择条选项"><i class="caret"></i></button>
    </div>

    <!-- Work area -->
    <div class="work">
        <aside class="resources">
            <button class="gear"><svg viewBox="0 0 16 16" fill="none" stroke="#222"><circle cx="8" cy="8" r="4.5" stroke-width="1.3"/><path d="M8 1v2M8 13v2M1 8h2M13 8h2M3 3l1 1M12 12l1 1M13 3l-1 1M4 12l-1 1" stroke-width="1.5"/></svg></button>
            <button><svg viewBox="0 0 24 24"><path d="M1 2l4-2 4 2v4l3 1v5l-4 2-7-2z" fill="#f7cf4c" stroke="#ab862c"/><path d="M1 7h8M5 3v4M6 8v5" stroke="#c79b32"/><path d="M13 12h9M4 16v8M4 19h6" stroke="#111" stroke-width="1.3"/><path d="M12 18l4-3 4 2v4l-4 2-4-1z" fill="#f7cf4c" stroke="#ab862c"/></svg></button>
            <button class="links"><svg viewBox="0 0 24 24"><path d="M3 1l7 5-7 5zM21 1l-7 5 7 5z" fill="#1a22c8"/><path d="M1 14h8v8H1z" fill="#fbe83c" stroke="#806a00"/><path d="M14 13l8 9h-8z" fill="#c01818" stroke="#701010"/><path d="M12 0v23" stroke="#111" stroke-dasharray="3 2"/></svg></button>
            <button class="current"><svg viewBox="0 0 24 24"><path d="M1 3v7c0 3 9 3 9 0V3" fill="#c878b8" stroke="#8a3a7c"/><ellipse cx="5.5" cy="3" rx="4.5" ry="2" fill="#eac0e0" stroke="#8a3a7c"/><path d="M13 9h9M5 13v10M5 18h6" stroke="#111" stroke-width="1.3"/><circle cx="16" cy="18" r="4.5" fill="#fff" stroke="#8a3a7c" stroke-width="1.5"/><circle cx="16" cy="18" r="1.5" fill="none" stroke="#8a3a7c"/></svg></button>
            <button class="library"><svg viewBox="0 0 24 24"><path d="M0 4l4-3h5l-2 3v18H1z" fill="#f0933c" stroke="#a04a10"/><path d="M7 4l4-3h5l-3 3v18H7z" fill="#35c04a" stroke="#157a28"/><path d="M14 4l4-3h6v17l-4 4h-6z" fill="#3f94e8" stroke="#1c58a8"/><path d="M20 5v17M3 7v12M10 7v12" stroke="#fff"/></svg></button>
            <button><svg viewBox="0 0 24 24"><path d="M9 1c9 0 14 6 14 14M10 5c6 0 9 4 9 10M10 9c4 0 5 2 5 5" fill="none" stroke="#4470c0" stroke-width="2"/><circle cx="8" cy="16" r="7.5" fill="#2373d0" stroke="#114a98"/><text x="8" y="21" text-anchor="middle" font-size="13" font-weight="700" fill="#fff">i</text></svg></button>
            <button><svg viewBox="0 0 24 24"><path d="M3 1h11l6 6v16H3z" fill="#fff" stroke="#4468b0" stroke-width="1.3"/><path d="M14 1v6h6" fill="#dfe8fa" stroke="#4468b0"/><circle cx="11.5" cy="15" r="5.5" fill="#3f8ad8"/><path d="M8 11c4-2 3 3 1 4s1 3 1 5c-5-2-5-7-2-9zM13 12l3 2v4l-3 1z" fill="#35a048"/></svg></button>
            <button><svg viewBox="0 0 24 24"><circle cx="12" cy="12" r="10" fill="#e4ecf8" stroke="#666" stroke-width="2"/><path d="M12 4v8h7" fill="none" stroke="#111" stroke-width="1.7"/><path d="M12 3v1M12 20v1M3 12h1M20 12h1" stroke="#333" stroke-width="1.5"/></svg></button>
            <button><svg viewBox="0 0 24 24"><path d="M1 1h8v22H1z" fill="url(#rainbow)"/><path d="M11 6l9 16" stroke="#111" stroke-width="3"/><path d="M11 0l1 4 5-1-4 4 2 5-4-3-4 3 1-5-3-3 5 0z" fill="#fff"/></svg></button>
            <button><svg viewBox="0 0 24 24"><path d="M2 1h5v18H2z" fill="#4f8ee0" stroke="#2858a0" stroke-dasharray="2 1"/><path d="M9 4h15l-6 5h-8M9 12h8" fill="none" stroke="#3c70b8" stroke-width="2"/><path d="M1 20h10" stroke="#e8c83c" stroke-width="2" stroke-dasharray="2 2"/><path d="M12 7l8 15" stroke="#111" stroke-width="3"/><path d="M11 2l2 3 5 0-4 3 1 4-3-2-4 2 1-4-3-3h4z" fill="#fff"/></svg></button>
            <button><svg viewBox="0 0 24 24"><path d="M8 4l4-2 7-1 2 3-2 1-2-1-9 11-2-1 8-10-4 2z" fill="#8a9096" stroke="#333" stroke-width=".8"/><path d="M3 11l1 3 3 0 0-3c3 1 4 3 3 5l5 3 4-2-1 3 2 2-6 1-8-5c-4 0-6-3-3-7z" fill="#a8aebc" stroke="#444" stroke-width=".8"/><circle cx="5" cy="20" r="3" fill="#f09a30"/></svg></button>
        </aside>

        <aside class="navigator">
            <div class="nav-title"><span>部件导航器</span><button aria-label="最大化"></button></div>
            <div class="tree">
                <div class="tree-rows">
                    <table>
                        <thead>
                            <tr><th class="name">名称 <i class="sort"></i></th><th class="latest">最新</th><th class="note">附</th></tr>
                        </thead>
                        <tbody>
                            <tr><td><div class="node"><i class="pm plus"></i><svg viewBox="0 0 16 16" fill="none" stroke="#1d8a4c"><path d="M1 4l6-3 6 3v7l-6 3-6-3zM1 4l6 3 6-3M7 1v13M1 11l6-4 6 4"/><path d="M9 14l6-1-2 3z" fill="#f08030" stroke="#c33"/></svg>模型</div></td><td></td><td></td></tr>
                            <tr><td><div class="node"><i class="pm plus"></i><svg viewBox="0 0 14 14"><use href="#check"/></svg><svg viewBox="0 0 16 16"><path d="M1 4l11-3 2 10-12 4z" fill="#fff" stroke="#d02020" stroke-width="1.3"/><circle cx="8" cy="7" r="4" fill="#4a60b0" stroke="#222"/><path d="M4 7l11 5" stroke="#222"/></svg>摄</div></td><td></td><td></td></tr>
                            <tr><td><div class="node"><i class="pm plus"></i><svg viewBox="0 0 16 16"><use href="#folder" y="1"/><path d="M9 1h6M9 3h6" stroke="#2c34b8"/></svg>用户</div></td><td></td><td></td></tr>
                            <tr><td><div class="node"><i class="pm"></i><svg viewBox="0 0 16 16"><use href="#folder" y="1"/></svg>模型</div></td><td></td><td></td></tr>
                            <tr><td><div class="node leaf"><input type="checkbox" id="f1" aria-label="基准坐标系" checked><label for="f1"><svg viewBox="0 0 16 16" fill="none" stroke="#333"><path d="M1 1v6l6 4 6-3M1 5l6-3 6 3"/></svg></label></div></td><td><svg viewBox="0 0 14 14"><use href="#check"/></svg></td><td></td></tr>
                            <tr><td><div class="node leaf"><input type="checkbox" id="f2" aria-label="草图" checked><label for="f2"><svg viewBox="0 0 16 16" fill="none" stroke="#333"><path d="M1 1h12v6H1zM1 9h6v6H1z"/></svg></label></div></td><td><svg viewBox="0 0 14 14"><use href="#check"/></svg></td><td></td></tr>
                            <tr><td><div class="node leaf last"><input type="checkbox" id="f3" aria-label="拉伸" checked><label for="f3"><svg viewBox="0 0 16 16"><path d="M1 3l5-2 8 2v10l-8 2-5-2z" fill="url(#gold)" stroke="#b0601c"/></svg></label></div></td><td><svg viewBox="0 0 14 14"><use href="#check"/></svg></td><td></td></tr>
                        </tbody>
                    </table>
                </div>
                <div class="hscroll"><svg viewBox="0 0 10 10"><path d="M7 1L3 5l4 4" fill="none" stroke="#444" stroke-width="2"/></svg><div><i></i></div><svg viewBox="0 0 10 10"><path d="M3 1l4 4-4 4" fill="none" stroke="#444" stroke-width="2"/></svg></div>
            </div>
            <div class="splitter"></div>
            <button class="section">相关性<svg viewBox="0 0 12 10"><path d="M1 1l5 7 5-7" fill="none" stroke="#0d5c7d" stroke-width="2"/></svg></button>
            <button class="section">细节<svg viewBox="0 0 12 10"><path d="M1 1l5 7 5-7" fill="none" stroke="#0d5c7d" stroke-width="2"/></svg></button>
            <button class="section">预览<svg viewBox="0 0 12 10"><path d="M1 1l5 7 5-7" fill="none" stroke="#0d5c7d" stroke-width="2"/></svg></button>
        </aside>

        <div class="graphics">
            <div class="doc-tabs">
                <a class="doc" href="#">
                    <svg viewBox="0 0 16 16"><path d="M2 3l4-2 3 1v6l6 2v3l-6 3-7-4z" fill="#2c62d8" stroke="#153a9c"/><path d="M2 3l3 1 4-2M5 4v6l5 3 5-3" fill="none" stroke="#a9c4ff"/></svg>
                    <span>_model1.prt</span>
                    <svg class="mod" viewBox="0 0 12 12" fill="none" stroke="#fff" stroke-width="1.5"><path d="M9 4V1H2v10h7V9M4 4h3M6 9l5-5"/></svg>
                    <svg class="mod" viewBox="0 0 12 12"><path d="M2 2l8 8M10 2l-8 8" stroke="#fff" stroke-width="2"/></svg>
                </a>
            </div>
            <svg class="scene" viewBox="364 202 1555 815">
                <path d="M700 438L695 508L706 727L711 658Z" fill="#b56d00" stroke="#3a2600"/>
                <path d="M711 658L1475 697L1470 766L706 727Z" fill="#b56d00" stroke="#3a2600"/>
                <path d="M700 438L1464 477L1475 697L711 658Z" fill="#ffc400" stroke="#4a5fd8" stroke-width="2"/>
                <!-- datum planes and axes -->
                <g fill="none" stroke="#4a3060">
                    <path d="M716 598L783 601L778 660M718 630L777 633L778 660M714 569L711 658L719 550"/>
                </g>
                <path d="M711 658L706 600M704 658h15M711 650v18" stroke="#1020c8" stroke-width="1.5"/>
                <path d="M711 658L830 664" stroke="#2030d0" stroke-width="1.5"/>
                <path d="M720 539l-4 15h7z" fill="#0808c0"/>
                <path d="M842 665l-14-3v6z" fill="#0808c0"/>
                <path d="M709 600l-3 9h6z" fill="#0830c0"/>
                <path d="M711 650l3-40 2 0v25z" fill="#0838c0"/>
                <path d="M711 650l-3-8 2-9 3 2z" fill="#159a48"/>
                <path d="M718 659l36-1 14 3-14 2z" fill="#d8281c"/>
                <g class="axis-names">
                    <text x="716" y="536" fill="#1c1c90">Z</text>
                    <text x="696" y="606" fill="#3850f0">ZC</text>
                    <text x="714" y="633" fill="#2a9a3a">YC</text>
                    <text x="754" y="676" fill="#e04030">XC</text>
                    <text x="847" y="669" fill="#1828d0">X</text>
                </g>
                <!-- view triad -->
                <path d="M433 915l25 2-2 34-25-1zM433 927l24 1M432 939l24 2" fill="#cdced0" stroke="#aeb0b2"/>
                <path d="M429 951l-1-17M425 924l3 7 3-6" stroke="#2a9a4a" stroke-width="1.5" fill="none"/>
                <path d="M428 950l2-26-1-1 3-12 3 12-2 1-1 26z" fill="#0838c0"/>
                <path d="M432 950l30 1v-3l12 4-12 4v-3l-30-1z" fill="#cc2424"/>
                <circle cx="429" cy="951" r="4" fill="#ddd" stroke="#888"/>
                <g class="axis-names">
                    <text x="428" y="910" fill="#4860f0">Z</text>
                    <text x="475" y="957" fill="#e04040">X</text>
                </g>
            </svg>
            <div class="meter"><i></i></div>
        </div>
    </div>

    <!-- Status bar -->
    <footer class="status">
        <span>选择对象并使用 MB3，或者双击某一对象</span>
        <div class="status-icons">
            <svg viewBox="0 0 16 16"><path d="M0 0h16v16H0z" fill="#ddd"/><path d="M2 4l4 2 3-4 5 2M3 9l4-1 5 1 2-3M4 13l4-3 3 4" fill="none" stroke="#999"/></svg>
            <svg viewBox="0 0 16 16"><use href="#fit"/></svg>
        </div>
    </footer>

    <!-- Input method bar -->
    <div class="ime">
        <span class="sogou">S</span>
        <b>中</b>
        <b>°,</b>
        <svg viewBox="0 0 16 16" fill="none" stroke="#2470b8" stroke-width="1.5"><circle cx="8" cy="8" r="7"/><path d="M5 5v2M11 5v2M4 9c1 4 7 4 8 0"/></svg>
        <svg viewBox="0 0 16 16" fill="none" stroke="#2470b8" stroke-width="1.5"><path d="M6 1h4v8H6z" fill="#2470b8"/><path d="M3 7c0 6 10 6 10 0M8 12v3M5 15h6"/></svg>
        <svg viewBox="0 0 16 16"><path d="M1 3h14v11H1z" fill="none" stroke="#2470b8" stroke-width="1.5"/><path d="M3 6h10M3 8h10M5 11h6" stroke="#2470b8" stroke-width="1.5" stroke-dasharray="2 1"/></svg>
        <svg viewBox="0 0 16 16" fill="#b4bfd4"><circle cx="7" cy="4" r="3"/><path d="M2 15c0-10 10-10 10 0z"/><circle cx="12" cy="12" r="3" fill="#8e9db8"/></svg>
        <svg viewBox="0 0 16 16" fill="#2470b8"><path d="M1 3l4-2c1 2 5 2 6 0l4 2-1 5-2-1v8H4V7L2 8z"/></svg>
        <svg viewBox="0 0 16 16" fill="#2470b8"><path d="M1 1h6v7H1zM1 10h6v5H1zM9 9h6v6H9z"/><path d="M10 2h4v5h-4z" fill="none" stroke="#2470b8" stroke-width="1.5"/></svg>
    </div>
    <div class="watermark">https://blog.csdn.net/weixin_42911798</div>

    <!-- Step callout -->
    <svg class="pointer" viewBox="0 0 110 72"><path d="M1 1l19 3-3 4 90 63-94-56-3 5z" fill="#f00"/></svg>
    <div class="step">1</div>
</body>
</html>
```
FILE: styles.css
```css
* {
    box-sizing: border-box;
}

body {
    margin: 0;
    height: 100vh;
    display: flex;
    flex-direction: column;
    position: relative;
    overflow: hidden;
    font-family: "Noto Sans", "Noto Sans CJK SC", sans-serif;
    font-size: 11px;
    color: #222;
    background: #fff;
}

button {
    display: flex;
    align-items: center;
    justify-content: center;
    padding: 0;
    border: none;
    background: none;
    font: inherit;
    color: inherit;
    white-space: nowrap;
}

a {
    color: inherit;
    text-decoration: none;
}

svg {
    display: block;
    flex: none;
    width: 16px;
    height: 16px;
    overflow: visible;
}

.defs {
    position: absolute;
    width: 0;
    height: 0;
}

.caret {
    flex: none;
    width: 0;
    height: 0;
    border: 3px solid transparent;
    border-top: 4px solid #111;
    border-bottom: none;
}

.sep {
    flex: none;
    width: 1px;
    height: 20px;
    background: #d5d5d5;
}

.drop {
    width: 14px;
}

.drop.bar .caret {
    position: relative;
}

.drop.bar .caret::before {
    content: "";
    position: absolute;
    left: -4px;
    top: -7px;
    width: 7px;
    height: 1px;
    background: #111;
}

.drop.up .caret {
    border-top: none;
    border-bottom: 4px solid #aaa;
}

/* Title bar */
.titlebar {
    flex: none;
    display: flex;
    align-items: center;
    height: 26px;
}

.quick {
    display: flex;
    align-items: center;
    width: 432px;
}

.quick .sep {
    margin-right: 1px;
}

.nx {
    width: 40px;
    padding-left: 3px;
    font-family: "Liberation Sans", sans-serif;
    font-size: 22px;
    font-weight: bold;
    color: #8aa0ae;
}

.q {
    width: 24px;
    height: 24px;
}

.q-save {
    width: 31px;
}

.q-edit {
    width: 24px;
}

.q-text {
    width: auto;
    gap: 4px;
    margin-left: 6px;
}

.q-text .caret {
    margin-left: 3px;
}

.title {
    flex: 1;
    margin: 0;
    text-align: center;
    font-size: 13px;
    font-weight: normal;
    color: #111;
}

.brand {
    width: 81px;
    font-family: "Open Sans", sans-serif;
    font-size: 13px;
    font-weight: 800;
    color: #009999;
}

.window-buttons {
    display: flex;
    gap: 10px;
    width: 72px;
    padding-left: 5px;
}

.window-buttons svg {
    width: 14px;
    height: 14px;
}

/* Ribbon tabs */
.tabs {
    flex: none;
    display: flex;
    align-items: center;
    height: 28px;
    background: #dadada;
    font-size: 13px;
    color: #333;
}

.tabs a {
    height: 28px;
    padding: 0 13px;
    line-height: 27px;
}

.tabs .file {
    width: 81px;
    padding: 0;
    margin-right: 2px;
    text-align: center;
    color: #fff;
    background: #539fb8;
}

.tabs .active {
    color: #0d5c7d;
    background: #fff;
    border-top: 1px solid #aaa;
    line-height: 25px;
}

.find {
    display: flex;
    align-items: center;
    width: 125px;
    height: 20px;
    margin-left: auto;
    margin-right: 8px;
    padding: 0 2px;
    background: #fff;
    border: 1px solid #aaa;
}

.find input {
    flex: 1;
    min-width: 0;
    padding: 0;
    border: none;
    outline: none;
    font: inherit;
    font-size: 11px;
}

.find input::placeholder {
    color: #aaa;
}

.help {
    width: 22px;
    margin-right: 4px;
}

.help:last-child {
    margin-right: 5px;
}

/* Ribbon */
.ribbon {
    flex: none;
    display: flex;
    align-items: flex-start;
    height: 94px;
    padding-top: 5px;
    border-bottom: 1px solid #d5d5d5;
}

.group {
    flex: none;
    height: 84px;
    border-right: 1px solid #d5d5d5;
}

.g-sketch { width: 178px; }
.g-feature { width: 369px; }
.g-sync { width: 172px; }
.g-std { width: 104px; }
.g-gear { width: 52px; }
.g-spring { width: 58px; }
.g-machine { width: 52px; }
.g-model { width: 98px; }
.g-p { width: 29px; }
.g-dim { width: 288px; }
.g-surface { width: 43px; }
.g-asm { width: 181px; }

.group-body {
    display: flex;
    align-items: flex-start;
    height: 70px;
}

.g-feature .group-body,
.g-sync .group-body,
.g-asm .group-body {
    padding-left: 9px;
}

.group-name {
    display: flex;
    align-items: center;
    height: 17px;
    padding-right: 8px;
    color: #0d5c7d;
}

.group-name span {
    flex: 1;
    margin-right: 4px;
    text-align: center;
    white-space: nowrap;
}

.group-name.left {
    padding-left: 2px;
}

.group-name.left span {
    margin: 0;
    text-align: left;
}

.tool {
    flex-direction: column;
    justify-content: flex-start;
    width: 40px;
    padding-top: 1px;
    line-height: 16px;
}

.tool.wide {
    width: 50px;
}

.tool.sketch {
    width: 57px;
}

.tool > svg {
    width: 30px;
    height: 30px;
    margin-bottom: 5px;
}

.tool .caret {
    margin-top: 4px;
}

.tool:disabled {
    color: #bbb;
}

.more {
    margin-left: 3px;
}

.more span {
    display: flex;
    align-items: center;
    justify-content: center;
    width: 38px;
    height: 34px;
    margin-bottom: 1px;
    border: 1px solid #d5d5d5;
    border-radius: 3px;
}

.gallery {
    display: grid;
    grid-template-columns: repeat(3, 1fr);
    width: 99px;
    height: 66px;
    border: 1px solid #d5d5d5;
}

.gallery svg {
    width: 22px;
    height: 22px;
}

.scroll {
    display: flex;
    flex-direction: column;
    justify-content: space-between;
    width: 18px;
    height: 62px;
    padding: 6px 2px;
}

.col {
    display: flex;
    flex-direction: column;
    align-items: flex-start;
    gap: 6px;
    margin: 0 6px;
}

.col button {
    gap: 4px;
    height: 16px;
    line-height: 16px;
}

.col .caret {
    margin-left: 4px;
}

.rows {
    flex-direction: column;
    gap: 8px;
    padding: 5px 0 0 4px;
}

.rows > div {
    display: flex;
    align-items: center;
    height: 22px;
}

.rows .sep {
    height: 18px;
    margin: 0 3px;
}

.rows button {
    width: 23px;
    height: 22px;
}

.rows .x {
    font-size: 12px;
}

.rows .boxed {
    width: 17px;
    height: 17px;
    margin: 0 3px;
    border: 1px solid #b83030;
}

.paren i {
    font-style: normal;
    color: #b83030;
}

.rows .tol,
.rows .fit {
    flex-direction: column;
    font-family: "Liberation Sans", sans-serif;
    font-size: 7px;
    line-height: 6px;
}

.tol b {
    font-weight: normal;
    color: #b83030;
}

.tol .g {
    color: #999;
}

.rows .fit {
    font-size: 8px;
    line-height: 8px;
    color: #3030b0;
}

.rows .fit span {
    font-size: 7px;
}

.ribbon-end {
    align-self: flex-end;
    margin: 0 1px 7px auto;
}

/* Selection bar */
.selbar {
    flex: none;
    display: flex;
    align-items: center;
    height: 32px;
    border-bottom: 1px solid #8f9496;
}

.selbar > .sep {
    height: 24px;
}

.menu {
    gap: 4px;
    width: 86px;
    padding-left: 4px;
}

.filter {
    position: relative;
    width: 133px;
    height: 20px;
    margin: 0 3px 0 12px;
}

.filter select {
    appearance: none;
    width: 100%;
    height: 100%;
    padding: 0 1px;
    border: 1px solid #aaa;
    border-radius: 0;
    background: #fff;
    font: inherit;
    color: #111;
}

.filter > .caret {
    position: absolute;
    right: 5px;
    top: 9px;
    border-width: 4px 4px 0;
}

.filter-list {
    position: absolute;
    top: 21px;
    left: 0;
    z-index: 5;
    width: 133px;
    margin: 0;
    padding: 1px;
    list-style: none;
    background: #fff;
    border: 1px solid #aaa;
    color: #111;
}

.filter-list li {
    line-height: 18px;
}

.filter-list .hover {
    background: #cde5ea;
}

.sel-tools {
    display: flex;
    align-items: center;
}

.sel-tools button {
    width: 24px;
    height: 22px;
}

.sel-tools .drop {
    width: 14px;
}

.snaps {
    margin: 0 6px 0 3px;
    gap: 2px;
}

.snaps button {
    width: 23px;
}

.snaps .on {
    background: #cde5ea;
    border: 1px solid #b2d3da;
}

.views {
    margin: 0 6px 0 8px;
}

.views button {
    width: 25px;
}

.views .drop {
    width: 12px;
}

.selbar-end {
    align-self: flex-end;
    margin: 0 1px 8px auto;
}

/* Resource bar */
.work {
    flex: 1;
    display: flex;
    min-height: 0;
}

.resources {
    flex: none;
    display: flex;
    flex-direction: column;
    width: 32px;
    background: #dadada;
    border-right: 1px solid #999;
}

.resources button {
    height: 42px;
    padding-left: 4px;
}

.resources svg {
    width: 23px;
    height: 23px;
}

.resources .gear {
    height: 26px;
    margin-bottom: 17px;
    padding: 0 2px 0 0;
}

.resources .gear svg {
    width: 16px;
    height: 16px;
}

.resources .links {
    height: 38px;
}

.resources .current {
    height: 45px;
    margin: 1px -1px 0 2px;
    padding-left: 1px;
    background: #fff;
    border: 1px solid #bbb;
    border-right: none;
}

.resources .library {
    height: 40px;
    margin-bottom: 7px;
}

.resources .library ~ button {
    height: 54px;
}

.resources button:nth-last-child(3) {
    margin-top: -6px;
}

.resources button:nth-last-child(-n+3) {
    height: 42px;
}

/* Part navigator */
.navigator {
    flex: none;
    display: flex;
    flex-direction: column;
    width: 332px;
    padding: 0 9px 5px 6px;
    border-right: 1px solid #8f9496;
    font-size: 12px;
}

.nav-title {
    display: flex;
    align-items: center;
    justify-content: space-between;
    height: 28px;
    padding: 0 7px 0 4px;
}

.nav-title button {
    width: 12px;
    height: 11px;
    margin-top: 2px;
    border: 1px solid #111;
    border-top-width: 2px;
}

.tree {
    flex: 1;
    display: flex;
    flex-direction: column;
    min-height: 0;
    padding: 1px;
    border: 1px solid #d5d5d5;
}

/* Empty rows and column lines carry on below the table */
.tree-rows {
    flex: 1;
    min-height: 0;
    overflow: hidden;
    background:
        linear-gradient(#e6e6e6, #e6e6e6) 199px 0 / 1px 100% no-repeat,
        linear-gradient(#e6e6e6, #e6e6e6) 299px 0 / 1px 100% no-repeat,
        repeating-linear-gradient(#fff 0 19px, #e6e6e6 19px 20px, #fafafa 20px 39px, #e6e6e6 39px 40px) 0 21px;
}

table {
    width: 100%;
    table-layout: fixed;
    border-collapse: separate;
    border-spacing: 0;
}

th {
    height: 21px;
    padding: 0 0 0 6px;
    overflow: hidden;
    text-align: left;
    font-weight: normal;
    white-space: nowrap;
    background: #f0f0f0;
    border-right: 1px solid #d5d5d5;
    border-bottom: 1px solid #d5d5d5;
}

.name { width: 200px; }
.latest { width: 100px; }

.note {
    border-right: none;
}

.sort {
    display: inline-block;
    margin-left: 14px;
    margin-bottom: 1px;
    border: 5px solid transparent;
    border-top: none;
    border-bottom: 5px solid #111;
}

td {
    height: 20px;
    padding: 0 5px;
    line-height: 16px;
    white-space: nowrap;
}

td > svg {
    width: 14px;
    height: 14px;
}

.node,
.node label {
    display: flex;
    align-items: center;
    gap: 3px;
}

.node {
    height: 20px;
    position: relative;
}

.node .pm + svg {
    margin-left: 2px;
}

.node.leaf {
    padding-left: 35px;
}

.node.leaf::before {
    content: "";
    position: absolute;
    left: 23px;
    top: 0;
    width: 10px;
    height: 10px;
    border-left: 1px dotted #999;
    border-bottom: 1px dotted #999;
}

.node.leaf:not(.last)::after {
    content: "";
    position: absolute;
    left: 23px;
    top: 10px;
    height: 10px;
    border-left: 1px dotted #999;
}

.pm {
    position: relative;
    width: 9px;
    height: 9px;
    border: 1px solid #bbb;
    background: linear-gradient(#222, #222) center / 5px 1px no-repeat #fff;
}

.pm.plus {
    background:
        linear-gradient(#222, #222) center / 5px 1px no-repeat,
        linear-gradient(#222, #222) center / 1px 5px no-repeat #fff;
}

.node input {
    appearance: none;
    position: relative;
    width: 12px;
    height: 12px;
    margin: 0;
    background: #fff;
    border: 1px solid #111;
}

.node input:checked::before {
    content: "";
    position: absolute;
    left: 0;
    top: 0;
    width: 10px;
    height: 10px;
    background: #1fb43c;
    clip-path: polygon(0 45%, 25% 35%, 42% 55%, 75% 5%, 100% 5%, 45% 100%, 30% 100%);
}

.hscroll {
    flex: none;
    display: flex;
    align-items: center;
    height: 16px;
    margin-top: 1px;
    padding: 0 3px;
    background: #f0f0f0;
}

.hscroll svg {
    width: 10px;
    height: 10px;
}

.hscroll div {
    flex: 1;
    height: 100%;
    padding: 0 4px;
}

.hscroll i {
    display: block;
    width: 78%;
    height: 100%;
    background: #cbcbcb;
}

.splitter {
    flex: none;
    height: 5px;
    margin-top: 1px;
    background: #dadada;
    border: 1px solid #aaa;
}

.section {
    flex: none;
    justify-content: space-between;
    height: 24px;
    padding: 0 5px 0 7px;
    border-bottom: 2px solid #d5d5d5;
    font-size: 14px;
    line-height: 20px;
    color: #0d5c7d;
}

.section svg {
    width: 12px;
    height: 10px;
}

/* Graphics window */
.graphics {
    flex: 1;
    display: flex;
    flex-direction: column;
    min-width: 0;
    position: relative;
}

.doc-tabs {
    flex: none;
    display: flex;
    height: 22px;
}

.doc {
    display: flex;
    align-items: center;
    gap: 5px;
    padding: 0 6px;
    color: #fff;
    background: #539fb8;
    font-size: 12px;
}

.doc .mod {
    width: 11px;
    height: 11px;
}

.scene {
    flex: 1;
    width: 100%;
    min-height: 0;
    background: linear-gradient(#b3b4b6 0%, #d2d3d5 45%, #e4e6e8 75%, #e8e9eb 100%);
}

.axis-names {
    font-family: "Liberation Sans", sans-serif;
    font-size: 12px;
}

.meter {
    position: absolute;
    right: 0;
    bottom: 77px;
    width: 9px;
    height: 59px;
    padding: 7px 0 7px 4px;
    background: #474f60;
    border: 1px solid #2b303c;
    border-right: none;
    border-radius: 3px 0 0 3px;
}

.meter i {
    display: block;
    height: 100%;
    background:
        repeating-linear-gradient(transparent 0 1px, #474f60 1px 2px),
        linear-gradient(#20242e 20%, #f0a860 22%, #e0d870 45%, #58d0b8 100%);
}

/* Status bar */
.status {
    flex: none;
    display: flex;
    align-items: center;
    justify-content: space-between;
    height: 22px;
    padding: 0 54px 3px 3px;
    border-top: 1px solid #999;
    font-weight: bold;
    color: #111;
}

.status-icons {
    display: flex;
    gap: 4px;
}

.ime {
    position: absolute;
    right: 653px;
    bottom: 0;
    display: flex;
    align-items: center;
    gap: 6px;
    width: 207px;
    height: 23px;
    padding: 0 4px 1px 0;
    background: #fff;
    border: 1px solid #999;
    border-bottom: none;
    font-size: 14px;
    color: #2470b8;
}

.ime b {
    width: 16px;
    text-align: center;
}

.sogou {
    flex: none;
    width: 25px;
    height: 25px;
    margin-top: -4px;
    border-radius: 4px;
    background: #ea5022;
    color: #fff;
    font-family: "Liberation Sans", sans-serif;
    font-size: 24px;
    font-weight: bold;
    line-height: 25px;
    text-align: center;
    transform: rotate(-8deg);
}

.watermark {
    position: absolute;
    right: 9px;
    bottom: 8px;
    font-family: Roboto, sans-serif;
    font-size: 16px;
    color: rgba(255, 255, 255, 0.6);
    text-shadow: 1px 1px 1px rgba(130, 130, 130, 0.4);
}

/* Step callout */
.pointer {
    position: absolute;
    left: 201px;
    top: 168px;
    z-index: 10;
    width: 110px;
    height: 72px;
}

.step {
    position: absolute;
    left: 312px;
    top: 228px;
    z-index: 10;
    width: 39px;
    height: 39px;
    border-radius: 50%;
    background: #fa4144;
    color: #fff;
    font-size: 16px;
    line-height: 38px;
    text-align: center;
}
```
